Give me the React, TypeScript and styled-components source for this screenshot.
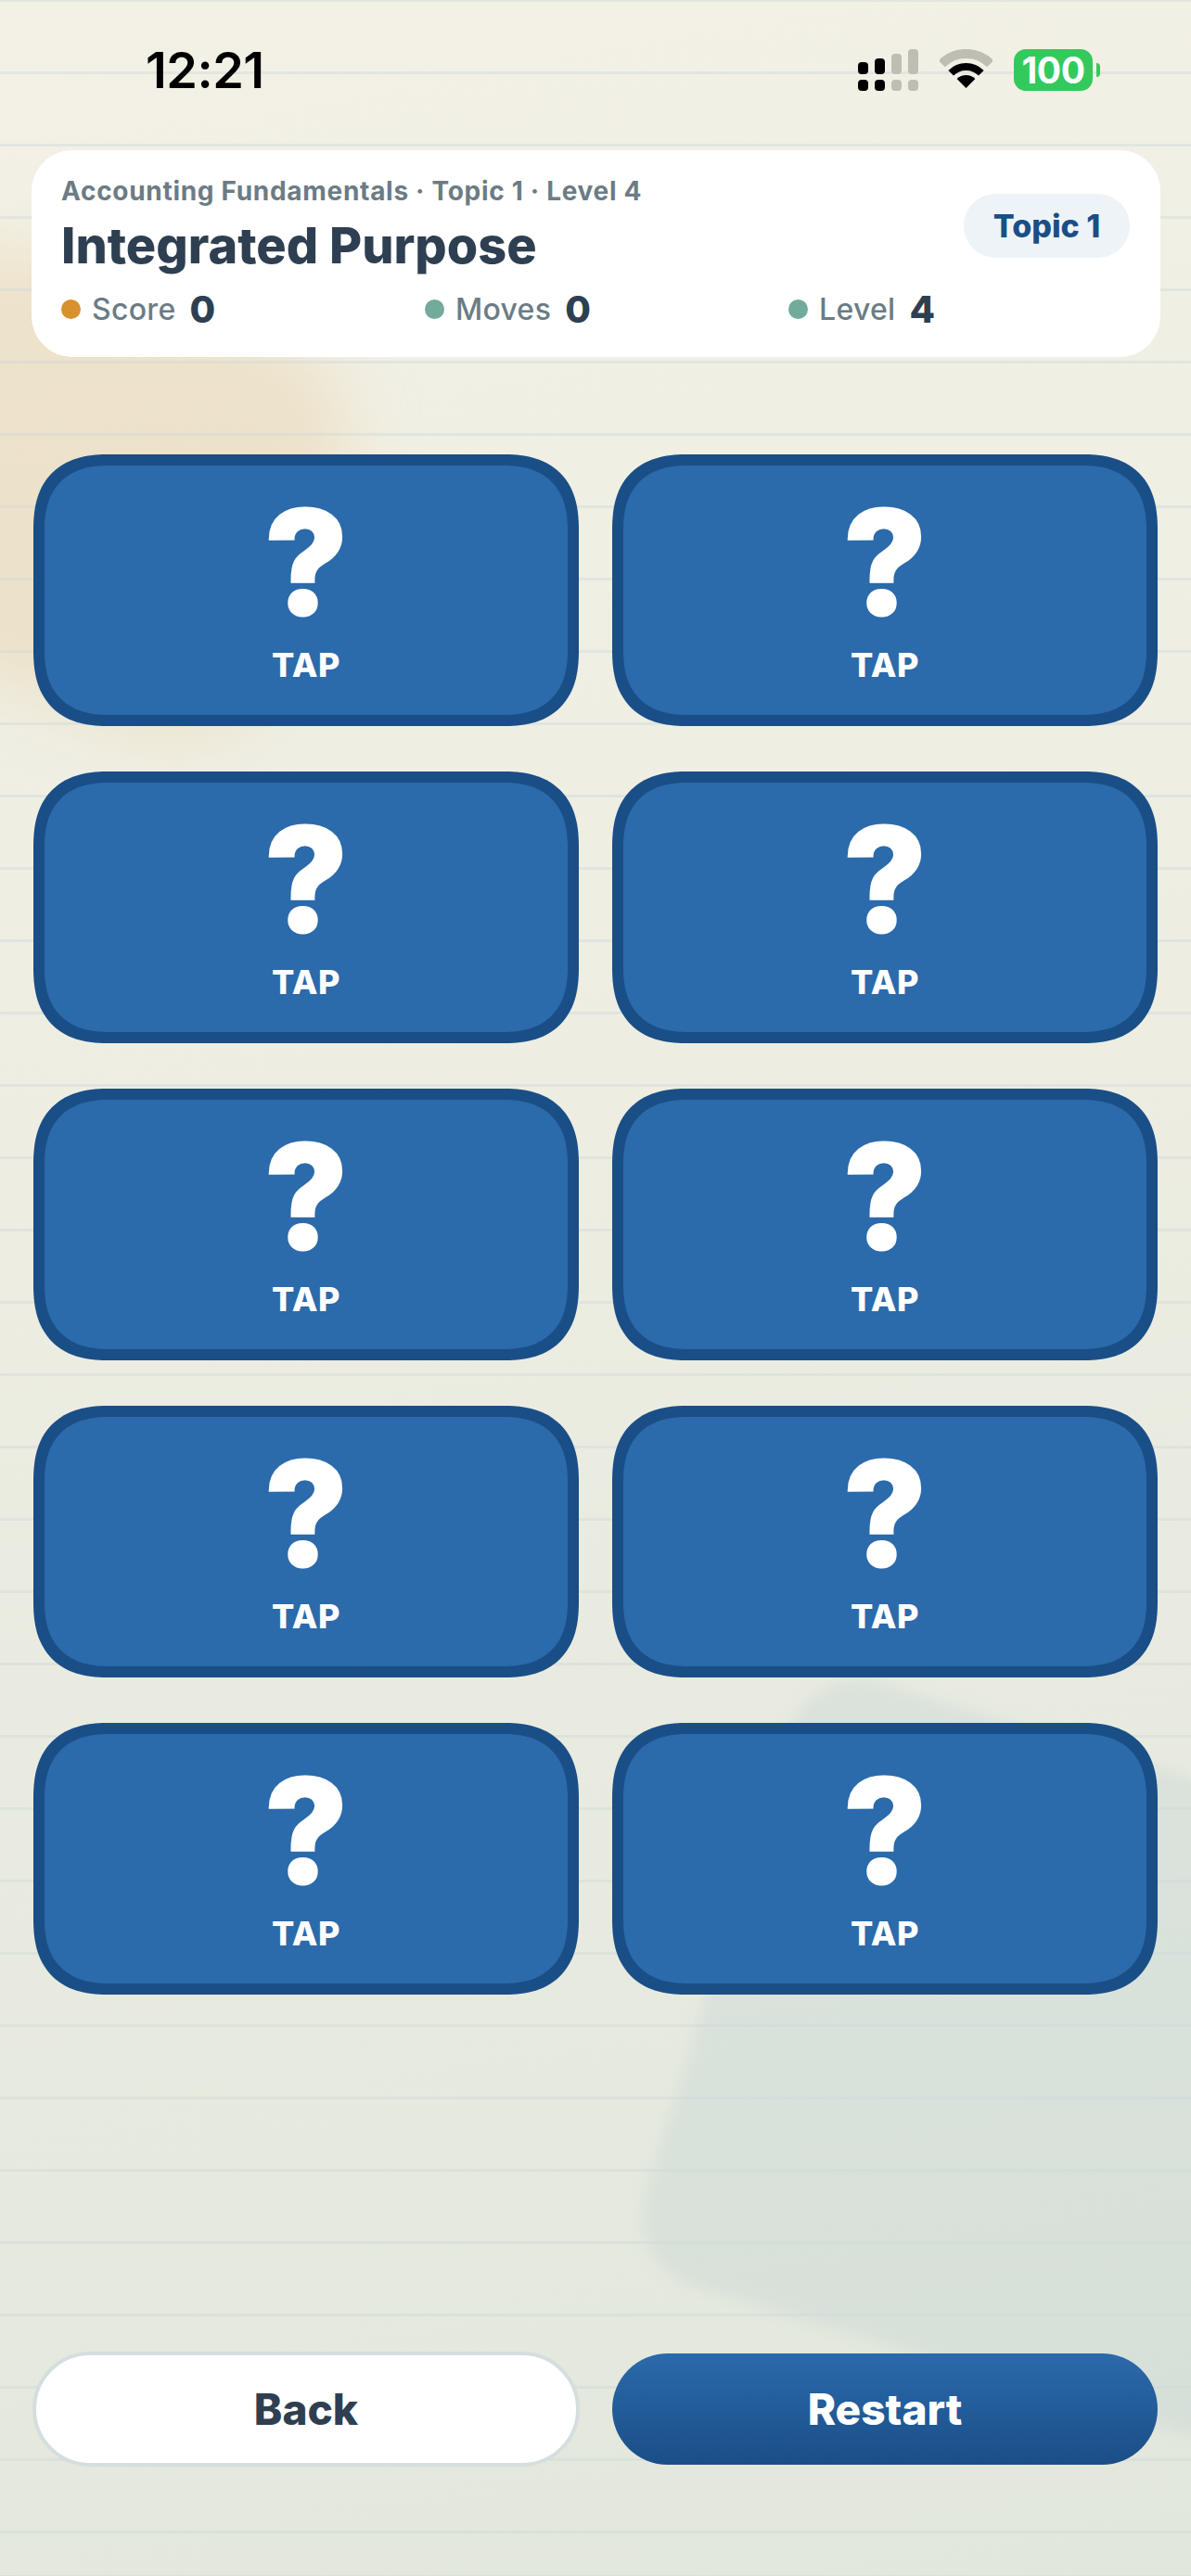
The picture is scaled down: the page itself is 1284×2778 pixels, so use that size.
import React from 'react'
import styled, { createGlobalStyle } from 'styled-components'

const NAVY = '#1a4e87'
const BLUE = '#2b6aab'
const INK = '#2f3f52'
const SLATE = '#6b7c85'
const AMBER = '#d8912f'
const TEAL = '#72aa9c'

const GlobalStyle = createGlobalStyle`
  html, body {
    margin: 0;
    padding: 0;
    background: #e8eade;
  }
  * {
    box-sizing: border-box;
  }
`

const Page = styled.div`
  position: relative;
  width: 1284px;
  height: 2778px;
  overflow: hidden;
  display: flex;
  flex-direction: column;
  font-family: Inter, 'Liberation Sans', sans-serif;
  background: linear-gradient(170deg, #f3f1e6 0%, #edede2 45%, #e2e7dc 100%);
`

const RuledLines = styled.div`
  position: absolute;
  inset: 0;
  background-image: repeating-linear-gradient(
    180deg,
    rgba(205, 215, 216, 0.42) 0px,
    rgba(205, 215, 216, 0.42) 3px,
    transparent 3px,
    transparent 78px
  );
  background-position: 0 -1px;
`

const Glow = styled.div`
  position: absolute;
  left: -160px;
  top: 305px;
  width: 510px;
  height: 450px;
  border-radius: 120px;
  background: rgba(230, 198, 150, 0.34);
  filter: blur(36px);
  transform: rotate(19deg);
`

const Slab = styled.div`
  position: absolute;
  left: 758px;
  top: 1879px;
  width: 700px;
  height: 680px;
  border-radius: 80px;
  background: rgba(170, 195, 205, 0.22);
  filter: blur(8px);
  transform: rotate(17deg);
`

const Layer = styled.div`
  position: relative;
  z-index: 1;
  display: flex;
  flex-direction: column;
  height: 100%;
`

const StatusBar = styled.div`
  display: flex;
  justify-content: space-between;
  align-items: flex-start;
  height: 162px;
  padding: 53px 106px 0 157px;
`

const Clock = styled.div`
  font-size: 54px;
  line-height: 46px;
  font-weight: 600;
  color: #000;
  letter-spacing: -0.5px;
`

const StatusIcons = styled.div`
  display: flex;
  align-items: flex-start;
  gap: 23px;
`

const Battery = styled.div`
  position: relative;
  width: 85px;
  height: 45px;
  border-radius: 13px;
  background: #34c95c;
  color: #fff;
  font-size: 39px;
  line-height: 45px;
  font-weight: 700;
  text-align: center;
  letter-spacing: -0.5px;

  &::after {
    content: '';
    position: absolute;
    left: 89px;
    top: 15px;
    width: 4px;
    height: 15px;
    border-radius: 0 8px 8px 0;
    background: #34c95c;
  }
`

const InfoCard = styled.section`
  display: flex;
  justify-content: space-between;
  margin: 0 33px 0 34px;
  height: 223px;
  padding: 28px 33px 0 32px;
  border-radius: 44px;
  background: #fff;
`

const InfoMain = styled.div`
  flex: 1;
  display: flex;
  flex-direction: column;
`

const Crumb = styled.div`
  font-size: 28px;
  line-height: 32px;
  font-weight: 700;
  color: ${SLATE};
  letter-spacing: 0.7px;
`

const Title = styled.h1`
  margin: 10px 0 0;
  font-size: 54px;
  line-height: 66px;
  font-weight: 800;
  color: ${INK};
`

const Stats = styled.div`
  display: grid;
  grid-template-columns: repeat(3, 368px);
  column-gap: 24px;
  margin-top: 13px;
  width: 0;
`

const Stat = styled.div`
  display: flex;
  align-items: center;
  height: 44px;
`

const Dot = styled.span<{ color: string }>`
  width: 21px;
  height: 21px;
  border-radius: 50%;
  background: ${(props) => props.color};
  margin-right: 12px;
`

const StatLabel = styled.span`
  font-size: 32px;
  font-weight: 500;
  letter-spacing: 0.3px;
  color: ${SLATE};
  margin-right: 15px;
`

const StatValue = styled.span`
  font-size: 40px;
  font-weight: 800;
  color: ${INK};
`

const TopicPill = styled.div`
  width: 179px;
  height: 69px;
  margin-top: 19px;
  border-radius: 35px;
  background: #eef3f7;
  color: ${NAVY};
  font-size: 34px;
  line-height: 69px;
  font-weight: 800;
  text-align: center;
`

const TileGrid = styled.div`
  display: grid;
  grid-template-columns: repeat(2, 588px);
  grid-auto-rows: 293px;
  column-gap: 36px;
  row-gap: 49px;
  margin: 105px 0 0 36px;
`

const Tile = styled.button`
  display: flex;
  flex-direction: column;
  align-items: center;
  padding: 0;
  border: 12px solid ${NAVY};
  border-radius: 82px;
  corner-shape: superellipse(1.3);
  background: ${BLUE};
  color: #fff;
  font-family: inherit;
`

const Mark = styled.span`
  margin-top: 30px;
  height: 149px;
  font-size: 154px;
  line-height: 149px;
  font-weight: 800;
  -webkit-text-stroke: 3px #fff;
`

const TapLabel = styled.span`
  margin-top: 14px;
  font-size: 36px;
  line-height: 44px;
  font-weight: 800;
  letter-spacing: 0.5px;
`

const Footer = styled.div`
  display: grid;
  grid-template-columns: repeat(2, 588px);
  column-gap: 36px;
  margin: auto 0 118px 36px;
`

const BackButton = styled.button`
  height: 124px;
  width: 590px;
  margin: -1px 0 0 -1px;
  border: 4px solid #d5dedf;
  border-radius: 62px;
  background: #fff;
  color: ${INK};
  font-family: inherit;
  font-size: 46px;
  font-weight: 800;
`

const RestartButton = styled.button`
  height: 120px;
  margin-top: 1px;
  border: 0;
  border-radius: 60px;
  background: linear-gradient(180deg, ${BLUE} 0%, ${NAVY} 100%);
  color: #fff;
  font-family: inherit;
  font-size: 46px;
  font-weight: 800;
`

const SignalIcon = () => (
  <svg width="65" height="45" viewBox="0 0 65 45">
    <rect x="0" y="14" width="11" height="13" rx="4" fill="#000" />
    <rect x="18" y="10" width="11" height="17" rx="4" fill="#000" />
    <rect x="36" y="5" width="11" height="22" rx="4" fill="#bfbeb5" />
    <rect x="54" y="0" width="11" height="27" rx="4" fill="#bfbeb5" />
    <rect x="0" y="33" width="11" height="12" rx="4" fill="#000" />
    <rect x="18" y="33" width="11" height="12" rx="4" fill="#000" />
    <rect x="36" y="33" width="11" height="12" rx="4" fill="#bfbeb5" />
    <rect x="54" y="33" width="11" height="12" rx="4" fill="#bfbeb5" />
  </svg>
)

const WifiIcon = () => (
  <svg width="57" height="43" viewBox="0 0 57 43" fill="none">
    <path d="M2.3 15.8A37 37 0 0 1 54.7 15.8" stroke="#bfbeb5" strokeWidth="10" />
    <path d="M12.2 25.7A23 23 0 0 1 44.8 25.7" stroke="#000" strokeWidth="8" />
    <path d="M28.5 42L18.6 32.1A14 14 0 0 1 38.4 32.1Z" fill="#000" />
  </svg>
)

const stats = [
  { label: 'Score', value: 0, color: AMBER },
  { label: 'Moves', value: 0, color: TEAL },
  { label: 'Level', value: 4, color: TEAL },
]

export default function App() {
  return (
    <Page>
      <GlobalStyle />
      <Glow />
      <Slab />
      <RuledLines />
      <Layer>
        <StatusBar>
          <Clock>12:21</Clock>
          <StatusIcons>
            <SignalIcon />
            <WifiIcon />
            <Battery>100</Battery>
          </StatusIcons>
        </StatusBar>

        <InfoCard>
          <InfoMain>
            <Crumb>Accounting Fundamentals · Topic 1 · Level 4</Crumb>
            <Title>Integrated Purpose</Title>
            <Stats>
              {stats.map((stat) => (
                <Stat key={stat.label}>
                  <Dot color={stat.color} />
                  <StatLabel>{stat.label}</StatLabel>
                  <StatValue>{stat.value}</StatValue>
                </Stat>
              ))}
            </Stats>
          </InfoMain>
          <TopicPill>Topic 1</TopicPill>
        </InfoCard>

        <TileGrid>
          {Array.from({ length: 10 }, (_, i) => (
            <Tile key={i}>
              <Mark>?</Mark>
              <TapLabel>TAP</TapLabel>
            </Tile>
          ))}
        </TileGrid>

        <Footer>
          <BackButton>Back</BackButton>
          <RestartButton>Restart</RestartButton>
        </Footer>
      </Layer>
    </Page>
  )
}
